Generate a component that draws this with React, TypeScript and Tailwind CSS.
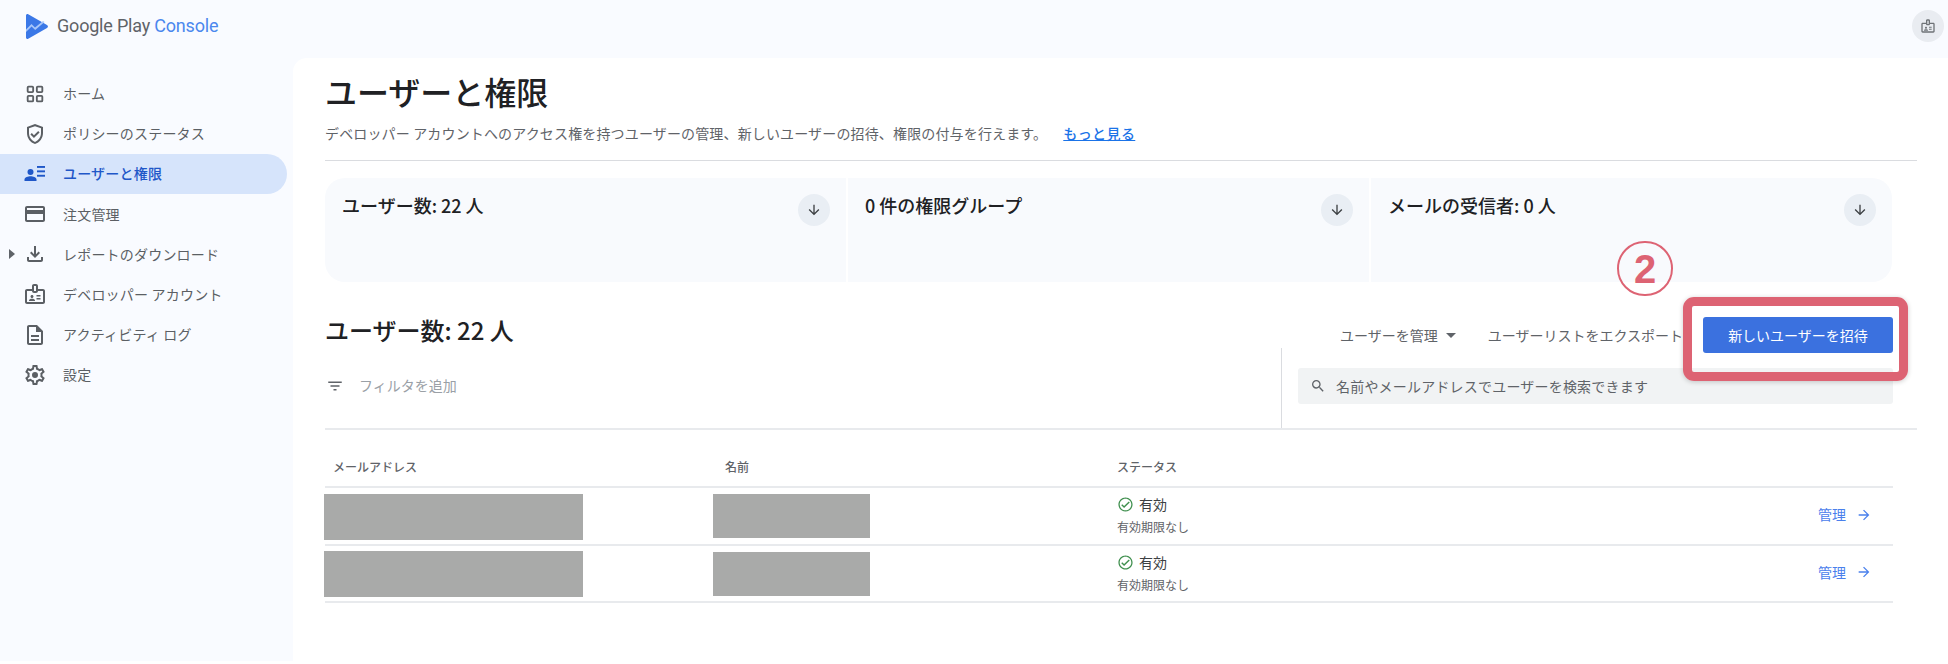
import React from "react";

const CJK = "font-['Noto_Sans_CJK_JP','Noto_Sans',sans-serif]";

function MI({ d, className, children }: { d?: string; className?: string; children?: React.ReactNode }) {
  return (
    <svg viewBox="0 0 24 24" fill="currentColor" className={className}>
      {d ? <path d={d} /> : null}
      {children}
    </svg>
  );
}

const P = {
  grid: "M3 5a2 2 0 0 1 2-2h4a2 2 0 0 1 2 2v4a2 2 0 0 1-2 2H5a2 2 0 0 1-2-2V5zm2 0v4h4V5H5zm8 0a2 2 0 0 1 2-2h4a2 2 0 0 1 2 2v4a2 2 0 0 1-2 2h-4a2 2 0 0 1-2-2V5zm2 0v4h4V5h-4zM3 15a2 2 0 0 1 2-2h4a2 2 0 0 1 2 2v4a2 2 0 0 1-2 2H5a2 2 0 0 1-2-2v-4zm2 0v4h4v-4H5zm8 0a2 2 0 0 1 2-2h4a2 2 0 0 1 2 2v4a2 2 0 0 1-2 2h-4a2 2 0 0 1-2-2v-4zm2 0v4h4v-4h-4z",
  shield: "M12 2 4 5v6.09c0 5.05 3.41 9.76 8 10.91 4.59-1.15 8-5.86 8-10.91V5l-8-3zm6 9.09c0 4-2.55 7.7-6 8.83-3.45-1.13-6-4.82-6-8.83V6.31l6-2.12 6 2.12v4.78zM8.82 11.09 7.4 12.5l3.54 3.54 5.66-5.66-1.41-1.41-4.25 4.24-2.12-2.12z",
  card: "M20 4H4c-1.11 0-1.99.89-1.99 2L2 18c0 1.11.89 2 2 2h16c1.11 0 2-.89 2-2V6c0-1.11-.89-2-2-2zm0 14H4v-6h16v6zm0-10H4V6h16v2z",
  download: "M18 15v3H6v-3H4v3c0 1.1.9 2 2 2h12c1.1 0 2-.9 2-2v-3h-2zm-1-4-1.41-1.41L13 12.17V4h-2v8.17L8.41 9.59 7 11l5 5 5-5z",
  badge: "M20 7h-5V4c0-1.1-.9-2-2-2h-2c-1.1 0-2 .9-2 2v3H4c-1.1 0-2 .9-2 2v11c0 1.1.9 2 2 2h16c1.1 0 2-.9 2-2V9c0-1.1-.9-2-2-2zM11 4h2v5h-2V4zm9 16H4V9h5c0 1.1.9 2 2 2h2c1.1 0 2-.9 2-2h5v11zm-11-4c.83 0 1.5-.67 1.5-1.5S9.83 13 9 13s-1.5.67-1.5 1.5S8.17 16 9 16zm2.08 1.18C10.44 16.9 9.74 16.75 9 16.75s-1.44.15-2.08.43c-.56.24-.92.78-.92 1.39V19h6v-.43c0-.61-.36-1.15-.92-1.39zM13.5 13h4v1.5h-4V13zm0 3h4v1.5h-4V16z",
  doc: "M8 16h8v2H8zm0-4h8v2H8zm6-10H6c-1.1 0-2 .9-2 2v16c0 1.1.89 2 1.99 2H18c1.1 0 2-.9 2-2V8l-6-6zm4 18H6V4h7v5h5v11z",
  gear: "M19.43 12.98c.04-.32.07-.64.07-.98 0-.34-.03-.66-.07-.98l2.11-1.65c.19-.15.24-.42.12-.64l-2-3.46c-.09-.16-.26-.25-.44-.25-.06 0-.12.01-.17.03l-2.49 1c-.52-.4-1.08-.73-1.69-.98l-.38-2.65C14.46 2.18 14.25 2 14 2h-4c-.25 0-.46.18-.49.42l-.38 2.65c-.61.25-1.17.59-1.69.98l-2.49-1c-.06-.02-.12-.03-.18-.03-.17 0-.34.09-.43.25l-2 3.46c-.13.22-.07.49.12.64l2.11 1.65c-.04.32-.07.65-.07.98 0 .33.03.66.07.98l-2.11 1.65c-.19.15-.24.42-.12.64l2 3.46c.09.16.26.25.44.25.06 0 .12-.01.17-.03l2.49-1c.52.4 1.08.73 1.69.98l.38 2.65c.03.24.24.42.49.42h4c.25 0 .46-.18.49-.42l.38-2.65c.61-.25 1.17-.59 1.69-.98l2.49 1c.06.02.12.03.18.03.17 0 .34-.09.43-.25l2-3.46c.12-.22.07-.49-.12-.64l-2.11-1.65zm-1.98-1.71c.04.31.05.52.05.73 0 .21-.02.43-.05.73l-.14 1.13.89.7 1.08.84-.7 1.21-1.27-.51-1.04-.42-.9.68c-.43.32-.84.56-1.25.73l-1.06.43-.16 1.13-.2 1.35h-1.4l-.19-1.35-.16-1.13-1.06-.43c-.43-.18-.83-.41-1.23-.71l-.91-.7-1.06.43-1.27.51-.7-1.21 1.08-.84.89-.7-.14-1.13c-.03-.31-.05-.54-.05-.74s.02-.43.05-.73l.14-1.13-.89-.7-1.08-.84.7-1.21 1.27.51 1.04.42.9-.68c.43-.32.84-.56 1.25-.73l1.06-.43.16-1.13.2-1.35h1.39l.19 1.35.16 1.13 1.06.43c.43.18.83.41 1.23.71l.91.7 1.06-.43 1.27-.51.7 1.21-1.07.85-.89.7.14 1.13zM12 9a3 3 0 1 0 0 6 3 3 0 0 0 0-6z",
  arrowDown: "M11 4h2v12.17l5.59-5.58L20 12l-8 8-8-8 1.41-1.41L11 16.17V4z",
  arrowRight: "M12 4l-1.41 1.41L16.17 11H4v2h12.17l-5.58 5.59L12 20l8-8z",
  filter: "M10 18h4v-2h-4v2zM3 6v2h18V6H3zm3 7h12v-2H6v2z",
  search: "M15.5 14h-.79l-.28-.27A6.47 6.47 0 0 0 16 9.5 6.5 6.5 0 1 0 9.5 16c1.61 0 3.09-.59 4.23-1.57l.27.28v.79l5 4.99L20.49 19l-4.99-5zm-6 0C7.01 14 5 11.99 5 9.5S7.01 5 9.5 5 14 7.01 14 9.5 11.99 14 9.5 14z",
  check: "M12 2C6.48 2 2 6.48 2 12s4.48 10 10 10 10-4.48 10-10S17.52 2 12 2zm0 18.2c-4.52 0-8.2-3.68-8.2-8.2S7.48 3.8 12 3.8s8.2 3.68 8.2 8.2-3.68 8.2-8.2 8.2zm4.59-12.42L10 14.17l-2.59-2.58L6 13l4 4 8-8-1.41-1.22z",
};

function UsersIcon({ className }: { className?: string }) {
  return (
    <MI className={className}>
      <circle cx="7.5" cy="10" r="3" />
      <path d="M1.5 19v-1.6c0-2 3.6-3.2 6-3.2s6 1.2 6 3.2V19h-12z" />
      <rect x="14" y="4" width="8" height="1.9" />
      <rect x="14" y="8.4" width="8" height="1.9" />
      <rect x="14" y="12.8" width="8" height="1.9" />
    </MI>
  );
}

const nav: { label: string; icon: React.ReactNode; active?: boolean; caret?: boolean }[] = [
  { label: "ホーム", icon: <MI d={P.grid} className="w-[22px] h-[22px]" /> },
  { label: "ポリシーのステータス", icon: <MI d={P.shield} className="w-[24px] h-[24px]" /> },
  { label: "ユーザーと権限", icon: <UsersIcon className="w-[24px] h-[24px]" />, active: true },
  { label: "注文管理", icon: <MI d={P.card} className="w-[24px] h-[24px]" /> },
  { label: "レポートのダウンロード", icon: <MI d={P.download} className="w-[24px] h-[24px]" />, caret: true },
  { label: "デベロッパー アカウント", icon: <MI d={P.badge} className="w-[24px] h-[24px]" /> },
  { label: "アクティビティ ログ", icon: <MI d={P.doc} className="w-[24px] h-[24px]" /> },
  { label: "設定", icon: <MI d={P.gear} className="w-[24px] h-[24px]" /> },
];

function NavItem({ item }: { item: (typeof nav)[number] }) {
  return (
    <div
      className={
        item.active
          ? "relative flex items-center h-[40px] w-[287px] rounded-r-full bg-[#d6e4fb] text-[#1f57c8] mb-[0.2px]"
          : "relative flex items-center h-[40px] w-[287px] text-[#5b5f64] mb-[0.2px]"
      }
    >
      {item.caret ? (
        <svg viewBox="0 0 6 10" fill="currentColor" className="absolute left-[9px] top-[15px] w-[6px] h-[10px] text-[#5f6368]">
          <path d="M0 0l6 5-6 5z" />
        </svg>
      ) : null}
      <span className="ml-[23px] w-[24px] flex items-center justify-center">{item.icon}</span>
      <span className={item.active ? "ml-[16px] text-[14px] font-medium tracking-[0.2px]" : "ml-[16px] text-[14px] tracking-[0.2px]"}>
        {item.label}
      </span>
    </div>
  );
}

function Stat({ title, first, last }: { title: string; first?: boolean; last?: boolean }) {
  return (
    <div
      className={
        "relative flex justify-between bg-[#f8fafd] pl-[17px] pr-[16px] pt-[14px] " +
        (first ? "rounded-l-[20px]" : last ? "rounded-r-[20px]" : "")
      }
    >
      <span className="text-[18px] leading-[26px] font-medium text-[#202124]">{title}</span>
      <span className="mt-[2px] w-[32px] h-[32px] rounded-full bg-[#e9eef4] flex items-center justify-center text-[#3c4043]">
        <MI d={P.arrowDown} className="w-[16px] h-[16px]" />
      </span>
    </div>
  );
}

function Row({ h, a, b }: { h: string; a: string; b: string }) {
  return (
    <div className={"grid grid-cols-[388px_404px_1fr] border-b-2 border-[#e8eaed] " + h}>
      <div className={a}>
        <div className="w-[259px] h-[46px] bg-[#a9aaa9] -ml-[1px]" />
      </div>
      <div className={b}>
        <div className="w-[157px] h-[44px] bg-[#a9aaa9]" />
      </div>
      <div className="flex justify-between">
        <div className="pt-[6px]">
          <div className="flex items-center h-[20px] text-[14px] text-[#3c4043]">
            <MI d={P.check} className="w-[17px] h-[17px] text-[#3f8f4e] mr-[5px]" />
            有効
          </div>
          <div className="mt-[5px] text-[12px] leading-[16px] text-[#5f6368]">有効期限なし</div>
        </div>
        <div className="flex items-center pb-[3px] text-[14px] text-[#4a80ec] pr-[21px]">
          管理
          <MI d={P.arrowRight} className="w-[16px] h-[16px] ml-[10px]" />
        </div>
      </div>
    </div>
  );
}

export default function App() {
  return (
    <div className={"relative w-full h-[664px] bg-white overflow-hidden " + CJK}>
      <div className="h-[661px] bg-[#f9fbff] flex flex-col">
        <header className="h-[58px] flex items-center justify-between shrink-0 pr-[4px]">
          <div className="flex items-center pl-[26px] pb-[6px]">
            <svg viewBox="0 0 22 25" className="w-[22px] h-[25px]">
              <path d="M0 1.5C0 .3 1.2-.4 2.2.2L21 11c1.3.8 1.3 2.2 0 3L2.2 24.8C1.2 25.4 0 24.7 0 23.5V1.5z" fill="#3b78e7" />
              <path d="M0 15.5 5.5 10 9 13.5 17 7l1.5 1-9.3 8L5.6 12.6 0 18z" fill="#a8c7fa" />
            </svg>
            <span className="ml-[9px] font-['Roboto','Noto_Sans',sans-serif] text-[18px] leading-[24px] tracking-[-0.2px] text-[#5f6368] whitespace-nowrap">
              Google Play <span className="text-[#4b88ee]">Console</span>
            </span>
          </div>
          <div className="w-[32px] h-[32px] rounded-full bg-[#e9ecf1] flex items-center justify-center text-[#6f7377] mb-[6px]">
            <MI d={P.badge} className="w-[16px] h-[16px]" />
          </div>
        </header>

        <div className="flex flex-1 min-h-0">
          <aside className="w-[293px] shrink-0 pt-[15.5px]">
            {nav.map((n) => (
              <NavItem key={n.label} item={n} />
            ))}
          </aside>

          <main className="flex-1 bg-white rounded-tl-[14px] pl-[32px] pr-[31px] pt-[13px]">
            <h1 className="text-[32px] leading-[40px] font-medium text-[#202124]">ユーザーと権限</h1>
            <p className="mt-[12px] text-[14px] leading-[20px] tracking-[0.15px] text-[#5f6368] flex">
              <span>デベロッパー アカウントへのアクセス権を持つユーザーの管理、新しいユーザーの招待、権限の付与を行えます。</span>
              <a className="ml-[16px] text-[#1a73e8] underline font-medium tracking-[0.4px]">もっと見る</a>
            </p>
            <div className="mt-[17px] h-px bg-[#dadce0]" />

            <div className="mt-[17px] mr-[25px] h-[104px] grid grid-cols-3 gap-[2px]">
              <Stat title="ユーザー数: 22 人" first />
              <Stat title="0 件の権限グループ" />
              <Stat title="メールの受信者: 0 人" last />
            </div>

            <div className="mt-[35px] h-[36px] flex items-center justify-between pr-[24px]">
              <h2 className="-mt-[10px] text-[24px] leading-[32px] font-medium text-[#202124]">ユーザー数: 22 人</h2>
              <div className="flex items-center text-[14px] text-[#5f6368]">
                <span>ユーザーを管理</span>
                <svg viewBox="0 0 10 5" fill="currentColor" className="ml-[8px] w-[10px] h-[5px]">
                  <path d="M0 0h10L5 5z" />
                </svg>
                <span className="ml-[32px]">ユーザーリストをエクスポート</span>
                <button className="ml-[20px] w-[190px] h-[36px] rounded-[3px] bg-[#3b71df] text-white text-[14px]">
                  新しいユーザーを招待
                </button>
              </div>
            </div>

            <div className="h-[77px] flex border-b-2 border-[#e8eaed]">
              <div className="flex-1 flex items-center pl-[1px] pb-[10px] text-[14px] text-[#9aa0a6]">
                <MI d={P.filter} className="w-[18px] h-[18px] text-[#5f6368]" />
                <span className="ml-[15px]">フィルタを追加</span>
              </div>
              <div className="w-px -mt-[5px] bg-[#dadce0]" />
              <div className="w-[635px] pl-[16px] pr-[24px] pt-[15px]">
                <div className="h-[36px] rounded-[3px] bg-[#f1f3f4] flex items-center pl-[12px] text-[14px] tracking-[0.2px] text-[#5f6368]">
                  <MI d={P.search} className="w-[16px] h-[16px]" />
                  <span className="ml-[10px]">名前やメールアドレスでユーザーを検索できます</span>
                </div>
              </div>
            </div>

            <div className="mr-[24px]">
              <div className="grid grid-cols-[392px_400px_1fr] h-[58px] border-b-2 border-[#e8eaed] pt-[28px] pl-[8px] text-[12px] leading-[18px] font-medium text-[#5f6368]">
                <div>メールアドレス</div>
                <div>名前</div>
                <div className="-ml-[8px]">ステータス</div>
              </div>
              <Row h="h-[58px]" a="pt-[6px]" b="pt-[6px]" />
              <Row h="h-[57px]" a="pt-[5px]" b="pt-[6px]" />
            </div>
          </main>
        </div>
      </div>

      <div className="absolute left-[1683px] top-[297px] w-[225px] h-[84px] rounded-[11px] border-[9px] border-[#dd6373] shadow-[0_1px_5px_rgba(0,0,0,0.2)]" />
      <div className="absolute left-[1617px] top-[241px] w-[56px] h-[55px] rounded-full border-2 border-[#dd6373] flex items-center justify-center text-[40px] leading-none font-bold text-[#dd6373] font-['Liberation_Sans',sans-serif]">
        2
      </div>
    </div>
  );
}
